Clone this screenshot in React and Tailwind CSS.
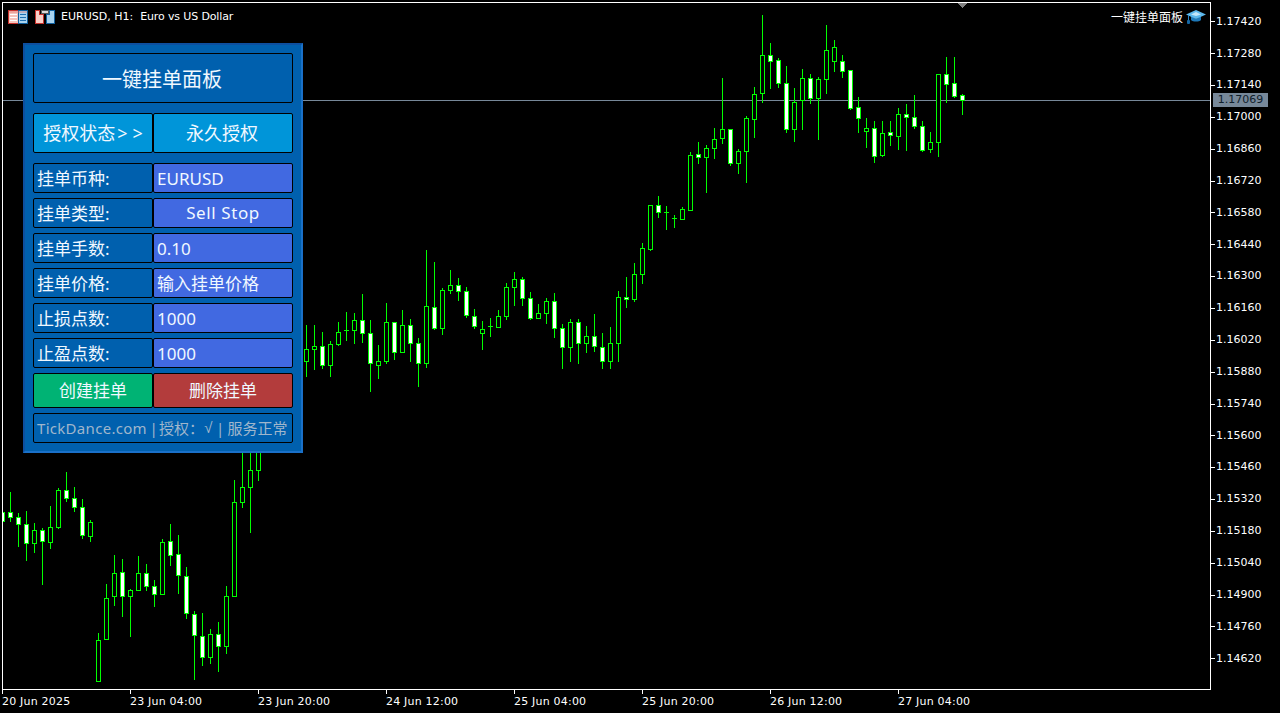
// App.jsx
// [x, high, bodyTop, bodyBottom, low, white]
const CANDLES = [
  [2, 490, 512, 521, 525, 1], [10, 492, 512, 517, 521, 1], [18, 513, 517, 524, 546, 1], [26, 511, 524, 543, 560, 1],
  [34, 523, 530, 543, 552, 0], [42, 528, 530, 541, 584, 1], [50, 506, 527, 542, 548, 0], [58, 488, 490, 527, 528, 0],
  [66, 472, 490, 498, 501, 1], [74, 487, 498, 507, 511, 1], [82, 499, 507, 535, 538, 1], [90, 520, 522, 536, 541, 0],
  [98, 633, 640, 681, 681, 0], [106, 584, 598, 639, 639, 0], [114, 555, 573, 596, 605, 0], [122, 559, 572, 596, 616, 1],
  [130, 589, 590, 596, 636, 0], [138, 556, 573, 590, 590, 0], [146, 564, 573, 586, 590, 1], [154, 580, 586, 594, 606, 1],
  [162, 539, 542, 594, 594, 0], [170, 524, 541, 555, 565, 1], [178, 535, 554, 575, 593, 1], [186, 567, 576, 613, 618, 1],
  [194, 611, 614, 635, 679, 1], [202, 613, 636, 657, 665, 1], [210, 629, 634, 657, 663, 0], [218, 622, 634, 646, 671, 1],
  [226, 586, 596, 646, 653, 0], [234, 480, 502, 596, 596, 0], [242, 440, 487, 502, 507, 0], [250, 440, 470, 487, 532, 0],
  [258, 440, 445, 470, 480, 0],
  [306, 325, 349, 361, 376, 0], [314, 325, 346, 349, 369, 0], [322, 332, 346, 365, 368, 1], [330, 341, 344, 365, 376, 0],
  [338, 322, 332, 344, 345, 0], [346, 312, 330, 331, 340, 2], [354, 313, 320, 330, 343, 0], [362, 294, 320, 333, 342, 1],
  [370, 320, 333, 363, 391, 1], [378, 345, 361, 365, 378, 0], [386, 303, 322, 361, 363, 0], [394, 322, 322, 352, 359, 1],
  [402, 310, 325, 352, 352, 0], [410, 319, 325, 343, 361, 1], [418, 338, 343, 363, 386, 1], [426, 250, 306, 363, 367, 0],
  [434, 262, 307, 328, 329, 1], [442, 288, 290, 328, 334, 0], [450, 270, 285, 290, 293, 0], [458, 278, 285, 291, 300, 1],
  [466, 287, 291, 315, 317, 1], [474, 309, 316, 326, 328, 1], [482, 321, 329, 333, 349, 0], [490, 318, 326, 327, 336, 2],
  [498, 310, 316, 327, 327, 0], [506, 283, 287, 316, 319, 0], [514, 272, 279, 287, 305, 0], [522, 277, 279, 298, 305, 1],
  [530, 292, 298, 318, 319, 1], [538, 304, 313, 318, 318, 0], [546, 298, 301, 313, 323, 0], [554, 293, 301, 328, 337, 1],
  [562, 324, 328, 347, 368, 1], [570, 319, 322, 347, 361, 0], [578, 319, 322, 343, 363, 1], [586, 326, 336, 343, 352, 0],
  [594, 314, 336, 346, 351, 1], [602, 333, 347, 361, 368, 1], [610, 327, 343, 361, 368, 0], [618, 291, 297, 343, 361, 0],
  [626, 277, 297, 299, 307, 1], [634, 263, 274, 299, 301, 0], [642, 243, 248, 274, 283, 0], [650, 205, 205, 249, 250, 0],
  [658, 196, 205, 212, 217, 1], [666, 206, 212, 213, 229, 2], [674, 215, 218, 219, 227, 2], [682, 207, 209, 219, 219, 0],
  [690, 152, 155, 210, 210, 0], [698, 142, 154, 157, 163, 1], [706, 145, 148, 157, 192, 0], [714, 128, 139, 148, 158, 0],
  [722, 78, 129, 138, 143, 0], [730, 129, 129, 163, 165, 1], [738, 149, 151, 163, 173, 0], [746, 116, 118, 151, 182, 0],
  [754, 87, 94, 119, 137, 0], [762, 15, 55, 93, 102, 0], [770, 43, 55, 61, 88, 1], [778, 58, 60, 83, 87, 1],
  [786, 66, 83, 129, 132, 1], [794, 88, 102, 129, 141, 0], [802, 69, 78, 100, 129, 0], [810, 74, 78, 98, 103, 1],
  [818, 77, 79, 98, 139, 0], [826, 25, 50, 79, 93, 0], [834, 40, 47, 61, 71, 0], [842, 55, 61, 71, 77, 1],
  [850, 70, 70, 108, 109, 1], [858, 97, 107, 118, 132, 1], [866, 118, 128, 131, 147, 0], [874, 121, 128, 156, 162, 1],
  [882, 121, 133, 155, 156, 0], [890, 121, 132, 135, 145, 1], [898, 108, 114, 136, 149, 0], [906, 104, 114, 117, 150, 1],
  [914, 95, 117, 126, 128, 1], [922, 121, 126, 150, 151, 1], [930, 132, 142, 149, 152, 0], [938, 74, 74, 142, 156, 0],
  [946, 57, 74, 84, 102, 1], [954, 57, 83, 96, 97, 1], [962, 94, 95, 100, 114, 1],
];

const PRICES = [
  '1.17420', '1.17280', '1.17140', '1.17000', '1.16860', '1.16720', '1.16580',
  '1.16440', '1.16300', '1.16160', '1.16020', '1.15880', '1.15740', '1.15600',
  '1.15460', '1.15320', '1.15180', '1.15040', '1.14900', '1.14760', '1.14620',
];

const TIMES = [
  '20 Jun 2025', '23 Jun 04:00', '23 Jun 20:00', '24 Jun 12:00',
  '25 Jun 04:00', '25 Jun 20:00', '26 Jun 12:00', '27 Jun 04:00',
];

const ROWS = [
  ['挂单币种:', 'EURUSD', ''],
  ['挂单类型:', 'Sell Stop', 'justify-center tracking-[0.6px] pb-px'],
  ['挂单手数:', '0.10', ''],
  ['挂单价格:', '输入挂单价格', ''],
  ['止损点数:', '1000', ''],
  ['止盈点数:', '1000', ''],
];

function Candle({ c }) {
  const [x, high, top, bottom, low, kind] = c;
  return (
    <g>
      <rect x={x} y={high} width="1" height={low - high + 1} fill="#00ff00" />
      {kind === 2 ? (
        <rect x={x - 2} y={top} width="5" height="1" fill="#00ff00" />
      ) : (
        <>
          <rect x={x - 2} y={top} width="5" height={bottom - top + 1} fill="#00ff00" />
          <rect x={x - 1} y={top + 1} width="3" height={Math.max(bottom - top - 1, 1)} fill={kind === 1 ? '#ffffff' : '#000000'} />
        </>
      )}
    </g>
  );
}

function TableIcon() {
  return (
    <svg width="20" height="14" viewBox="0 0 20 14" shapeRendering="crispEdges">
      <rect x="0.5" y="0.5" width="10" height="13" fill="#f6c4bc" stroke="#c8322c" />
      <rect x="10.5" y="0.5" width="9" height="13" fill="#a9d3ef" stroke="#10609f" />
      <path d="M2 4.5H9M2 7.5H9M2 10.5H9" stroke="#ffffff" />
      <path d="M12 4.5H18M12 7.5H18M12 10.5H18" stroke="#1f6fb0" />
      <rect x="1" y="1" width="18" height="2" fill="#e06a60" opacity="0.35" />
    </svg>
  );
}

function ChartIcon() {
  return (
    <svg width="20" height="14" viewBox="0 0 20 14" shapeRendering="crispEdges">
      <path d="M0.5 0.5H4.5V4.5H8.5V13.5H0.5Z" fill="#fbd0c8" stroke="#c8322c" />
      <path d="M11.5 4.5H14.5V0.5H19.5V13.5H11.5Z" fill="#a9d3ef" stroke="#10609f" />
      <rect x="6.5" y="0.5" width="7" height="3" fill="#d8d8d8" stroke="#555555" />
    </svg>
  );
}

function CapIcon() {
  return (
    <svg width="20" height="16" viewBox="0 0 20 16">
      <path d="M5 7V11C7 13 13 13 15 11V7L10 10Z" fill="#1d78b8" />
      <path d="M10 1L20 5.5L10 10L0 5.5Z" fill="#5cb8ec" />
      <path d="M10 3L15 5.5L10 7L5 5.5Z" fill="#c4e6f8" />
      <rect x="2" y="6" width="1" height="6" fill="#2a86c6" />
      <rect x="1" y="11" width="3" height="4" rx="1" fill="#1466a4" />
    </svg>
  );
}

function Cell({ className, children }) {
  return (
    <div className={`flex items-center border border-black rounded-[2px] text-[#f0f8ff] ${className}`}>
      {children}
    </div>
  );
}

function Panel() {
  return (
    <div className="absolute left-[20px] top-[40px] w-[280px] h-[410px] bg-[#0060ae] border-2 border-t-[#0d4f9f] border-l-[#0d4f9f] border-r-[#1a70c8] border-b-[#1a70c8] p-2 font-['Noto_Sans','Noto_Sans_CJK_SC',sans-serif]">
      <Cell className="h-[50px] justify-center pt-[3px] pr-[2px] text-[20px]">一键挂单面板</Cell>

      <div className="flex mt-[10px] h-[40px] text-[18px]">
        <Cell className="w-[120px] justify-center bg-[#0095d9]">
          授权状态<span className="tracking-[5px] ml-[2px] -mr-[5px]">&gt;&gt;</span>
        </Cell>
        <Cell className="w-[140px] justify-center pr-[2px] bg-[#0095d9]">永久授权</Cell>
      </div>

      <div className="flex flex-col gap-[5px] mt-[10px]">
        {ROWS.map(([label, value, align]) => (
          <div key={label} className="flex h-[30px] text-[17px]">
            <Cell className="w-[120px] pl-[3px] pt-px">{label}</Cell>
            <Cell className={`w-[140px] pt-px bg-[#4169e1] ${align || 'pl-[3px]'}`}>{value}</Cell>
          </div>
        ))}
      </div>

      <div className="flex h-[35px] mt-[5px] text-[17px]">
        <Cell className="w-[120px] justify-center bg-[#00b374]">创建挂单</Cell>
        <Cell className="w-[140px] justify-center bg-[#b33c3c]">删除挂单</Cell>
      </div>

      <div className="flex items-center h-[30px] mt-[5px] pl-[3px] border border-black rounded-[2px] text-[15px] whitespace-pre text-[#9fb6cc]">
        <span className="tracking-[0.3px]">TickDance.com</span>
        <span className="tracking-[-1.3px]"> | </span>
        <span>授权：</span>
        <span className="font-['Liberation_Sans',sans-serif]">√</span>
        <span className="tracking-[-0.3px]"> | </span>
        <span>服务正常</span>
      </div>
    </div>
  );
}

export default function App() {
  return (
    <div className="w-[1280px] h-[713px] bg-black text-white overflow-hidden pt-[2px] pl-[2px] font-['DejaVu_Sans',sans-serif] text-[11px]">
      <div className="flex">
        {/* Chart */}
        <div className="relative w-[1209px] h-[688px] border border-white shrink-0">
          <svg width="1207" height="686" viewBox="3 3 1207 686" shapeRendering="crispEdges" className="block">
            <rect x="3" y="100" width="1207" height="1" fill="#778899" />
            <polygon points="957,3 967,3 962,8" fill="#808080" />
            {CANDLES.map(c => <Candle key={c[0]} c={c} />)}
          </svg>

          <div className="absolute left-[5px] top-[6px] flex items-center">
            <TableIcon />
            <div className="ml-[7px]"><ChartIcon /></div>
            <span className="ml-[6px] whitespace-pre">EURUSD, H1:  <span className="tracking-[-0.13px]">Euro vs US Dollar</span></span>
          </div>

          <div className="absolute right-[4px] top-[5px] flex items-center gap-[3px]">
            <span className="text-[12px] font-['Noto_Sans_CJK_SC',sans-serif]">一键挂单面板</span>
            <CapIcon />
          </div>

          <Panel />
        </div>

        {/* Price axis */}
        <div className="relative pt-[4px] flex-1">
          {PRICES.map(p => (
            <div key={p} className="flex items-center h-[31.85px]">
              <div className="w-[4px] h-px bg-white" />
              <span className="ml-[1px]">{p}</span>
            </div>
          ))}
          <div className="absolute left-[2px] top-[91px] w-[55px] h-[14px] bg-[#778899] text-[#10202c] flex items-center justify-center">
            1.17069
          </div>
        </div>
      </div>

      {/* Time axis */}
      <div className="flex">
        {TIMES.map(t => (
          <div key={t} className="w-[128px] shrink-0">
            <div className="w-px h-[4px] bg-white" />
            <div className="mt-[1px] leading-[14px] tracking-[0.2px] whitespace-nowrap">{t}</div>
          </div>
        ))}
      </div>
    </div>
  );
}
